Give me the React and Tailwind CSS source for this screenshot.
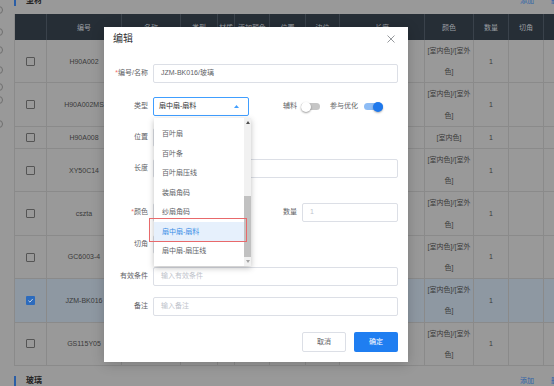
const HEADERS = ['', '编号', '名称', '类型', '材质', '添加颜色', '位置', '边位', '长度', '颜色', '数量', '切角', '操作']

const ROWS = [
  { code: 'H90A002', lines: 2 },
  { code: 'H90A002MS', lines: 2 },
  { code: 'H90A008', lines: 1 },
  { code: 'XY50C14', lines: 2 },
  { code: 'cszta', lines: 2 },
  { code: 'GC6003-4', lines: 2 },
  { code: 'JZM-BK016', lines: 2, checked: true },
  { code: 'GS115Y05', lines: 2 },
]

const OPTIONS = ['纱扇压线', '百叶扇', '百叶条', '百叶扇压线', '装扇角码', '纱扇角码', '扇中扇-扇料', '扇中扇-扇压线']

const GRID = 'grid grid-cols-[32px_75px_59px_37px_17px_35px_36px_34px_85px_49px_35px_35px_40px]'

function Checkbox({ checked }) {
  if (checked) {
    return (
      <span className="w-[9px] h-[9px] rounded-[1px] bg-[#2c6bbd] flex items-center justify-center">
        <svg width="7" height="7" viewBox="0 0 10 10">
          <path d="M2 5.2 L4.2 7.3 L8.2 2.8" fill="none" stroke="#c9d6e6" strokeWidth="1.4" />
        </svg>
      </span>
    )
  }
  return <span className="w-[9px] h-[9px] rounded-[1px] border border-[#555]" />
}

function Toggle({ on }) {
  return (
    <span className="relative w-[19px] h-[11px] flex items-center shrink-0">
      <span className={on ? 'w-full h-[7px] rounded-full bg-[#8dbcf5]' : 'w-full h-[7px] rounded-full bg-[#c6c6c6]'} />
      {on ? (
        <span className="absolute right-0 top-[0.5px] w-[10px] h-[10px] rounded-full bg-[#1e78ec] shadow-[0_1px_2px_rgba(0,0,0,0.3)]" />
      ) : (
        <span className="absolute left-0 top-[0.5px] w-[10px] h-[10px] rounded-full bg-white shadow-[0_1px_2px_rgba(0,0,0,0.4)]" />
      )}
    </span>
  )
}

function Field({ label, required, className, children }) {
  return (
    <div className={`flex items-center h-[19px] shrink-0 ${className}`}>
      <span className="w-[44px] shrink-0 text-right text-[7px] text-[#606266] whitespace-nowrap">
        {required && <span className="text-[#f56c6c]">*</span>}
        {label}
      </span>
      <div className="ml-[5px] flex-1 flex items-center h-full">{children}</div>
    </div>
  )
}

function Input({ value, placeholder, className = 'flex-1' }) {
  return (
    <div className={`${className} h-full border border-[#dcdfe6] rounded-[2px] flex items-center px-[7px] text-[7px]`}>
      {value ? <span className="text-[#606266]">{value}</span> : <span className="text-[#c0c4cc]">{placeholder}</span>}
    </div>
  )
}

function SectionHeader({ title, className }) {
  return (
    <div className={`flex items-center shrink-0 pr-[5px] ${className}`}>
      <span className="w-[2px] h-[10px] bg-[#2a5ea6]" />
      <span className="ml-[10px] text-[8px] leading-[12px] font-bold text-[#222]">{title}</span>
      <span className="ml-auto text-[7px] leading-[12px] text-[#2f62a8]">添加</span>
      <span className="ml-[17px] text-[7px] leading-[12px] text-[#2f62a8]">删除</span>
    </div>
  )
}

function Dropdown() {
  return (
    <div className="absolute left-0 top-[20px] w-[97px] h-[148px] bg-white flex shadow-[0_2px_6px_rgba(0,0,0,0.25)] z-10">
      <div className="flex-1 overflow-hidden">
        <div className="-mt-[13px]">
          {OPTIONS.map((opt) => (
            <div
              key={opt}
              className={
                opt === '扇中扇-扇料'
                  ? 'h-[19.5px] pl-[8px] flex items-center text-[7px] text-[#3a8ee6] bg-[#e6f0fc]'
                  : 'h-[19.5px] pl-[8px] flex items-center text-[7px] text-[#606266]'
              }
            >
              {opt}
            </div>
          ))}
        </div>
      </div>
      <div className="w-[7px] bg-[#f1f1f1] flex flex-col">
        <div className="h-[9px] flex items-center justify-center">
          <svg width="4" height="3" viewBox="0 0 4 3"><path d="M0 3 L2 0 L4 3 Z" fill="#505050" /></svg>
        </div>
        <div className="mt-[69px] h-[61px] bg-[#c1c1c1]" />
        <div className="h-[9px] flex items-center justify-center">
          <svg width="4" height="3" viewBox="0 0 4 3"><path d="M0 0 L2 3 L4 0 Z" fill="#a3a3a3" /></svg>
        </div>
      </div>
    </div>
  )
}

function Modal() {
  return (
    <div className="absolute left-[104px] top-[27px] w-[304px] h-[335px] bg-white shadow-[0_2px_12px_rgba(0,0,0,0.2)] flex flex-col">
      <div className="h-[23px] shrink-0 flex items-center justify-between pl-[9px] pr-[13px]">
        <span className="text-[10px] leading-[14px] text-[#303133]">编辑</span>
        <svg width="8" height="8" viewBox="0 0 8 8">
          <path d="M0.5 0.5 L7.5 7.5 M7.5 0.5 L0.5 7.5" stroke="#8a8d92" strokeWidth="0.9" />
        </svg>
      </div>

      <div className="flex flex-col pr-[10px]">
        <Field label="编号/名称" required className="mt-[14px]">
          <Input value="JZM-BK016/玻璃" />
        </Field>

        <Field label="类型" className="mt-[14px]">
          <div className="relative w-[96px] h-full border border-[#409eff] rounded-[2px] flex items-center pl-[5px] pr-[9px] text-[7px] text-[#303133]">
            <span className="flex-1">扇中扇-扇料</span>
            <svg width="5" height="3" viewBox="0 0 5 3"><path d="M0 3 L2.5 0 L5 3 Z" fill="#409eff" /></svg>
            <Dropdown />
            <div className="absolute left-[-5px] top-[120px] w-[98px] h-[24px] border border-[#e8696b] z-20" />
          </div>
          <span className="ml-[34px] text-[7px] text-[#606266]">辅料</span>
          <span className="ml-[4px]"><Toggle /></span>
          <span className="ml-[10px] text-[7px] text-[#606266]">参与优化</span>
          <span className="ml-[6px]"><Toggle on /></span>
        </Field>

        <Field label="位置" className="mt-[12px]">
          <Input className="w-[96px]" />
        </Field>

        <Field label="长度" className="mt-[12px]">
          <Input />
        </Field>

        <Field label="颜色" required className="mt-[25px]">
          <Input className="w-[96px]" />
          <span className="ml-auto text-[7px] text-[#606266]">数量</span>
          <Input className="ml-[5px] w-[96px]" placeholder="1" />
        </Field>

        <Field label="切角" className="mt-[13px]">
          <Input className="w-[96px]" />
        </Field>

        <Field label="有效条件" className="mt-[13px]">
          <Input placeholder="输入有效条件" />
        </Field>

        <Field label="备注" className="mt-[11px]">
          <Input placeholder="输入备注" />
        </Field>

        <div className="mt-[16px] flex justify-end gap-[8px]">
          <button className="w-[44px] h-[20px] border border-[#dcdfe6] rounded-[2px] bg-white text-[7px] text-[#606266]">取消</button>
          <button className="w-[44px] h-[20px] rounded-[2px] bg-[#1f7ef1] text-[7px] text-white">确定</button>
        </div>
      </div>
    </div>
  )
}

export default function App() {
  return (
    <div className="relative w-[554px] h-[386px] overflow-hidden bg-[#999999] flex font-['Liberation_Sans','Noto_Sans_CJK_SC',sans-serif]">
      {/* sidebar icons, mostly cut off */}
      <div className="w-[14px] shrink-0 flex flex-col">
        {[6, 14, 10, 12, 9, 5, 16].map((gap, i) => (
          <span key={i} className="-ml-[5px] w-[8px] h-[8px] shrink-0 rounded-full border border-[#6f6f6f]" style={{ marginTop: gap }} />
        ))}
      </div>

      <div className="w-[556px] shrink-0 flex flex-col">
        <SectionHeader title="型材" className="-mt-[12px] h-[26px]" />

        {/* table */}
        <div className="shrink-0 border-l border-[#8a8a8a]">
          <div className={`${GRID} h-[26px] bg-[#262e36]`}>
            {HEADERS.map((h, i) => (
              <div key={i} className="h-[26px] pt-[9px] text-center border-r border-[#3a424b] text-[7px] leading-[9px] text-[#9c9fa3] whitespace-nowrap">
                {h}
              </div>
            ))}
          </div>
          {ROWS.map((row) => (
            <div
              key={row.code}
              className={`${GRID} border-b border-[#8a8a8a] text-[7px] text-[#3a3a3a] leading-[21.2px] ${row.checked ? 'bg-[#8e98a2]' : ''}`}
            >
              <div className="flex items-center justify-center border-r border-[#8a8a8a]">
                <Checkbox checked={row.checked} />
              </div>
              <div className="flex items-center justify-center border-r border-[#8a8a8a] whitespace-nowrap">{row.code}</div>
              {[0, 1, 2, 3, 4, 5, 6].map((c) => (
                <div key={c} className="border-r border-[#8a8a8a]" />
              ))}
              <div className="flex flex-col items-center justify-center border-r border-[#8a8a8a] text-center whitespace-nowrap">
                {row.lines === 2 ? (
                  <>
                    <span>[室内色]/[室外</span>
                    <span>色]</span>
                  </>
                ) : (
                  <span>[室内色]</span>
                )}
              </div>
              <div className="flex items-center justify-center border-r border-[#8a8a8a]">1</div>
              <div className="border-r border-[#8a8a8a]" />
              <div className="border-r border-[#8a8a8a]" />
            </div>
          ))}
        </div>

        <SectionHeader title="玻璃" className="mt-[4px] h-[22px]" />
      </div>

      <Modal />
    </div>
  )
}
